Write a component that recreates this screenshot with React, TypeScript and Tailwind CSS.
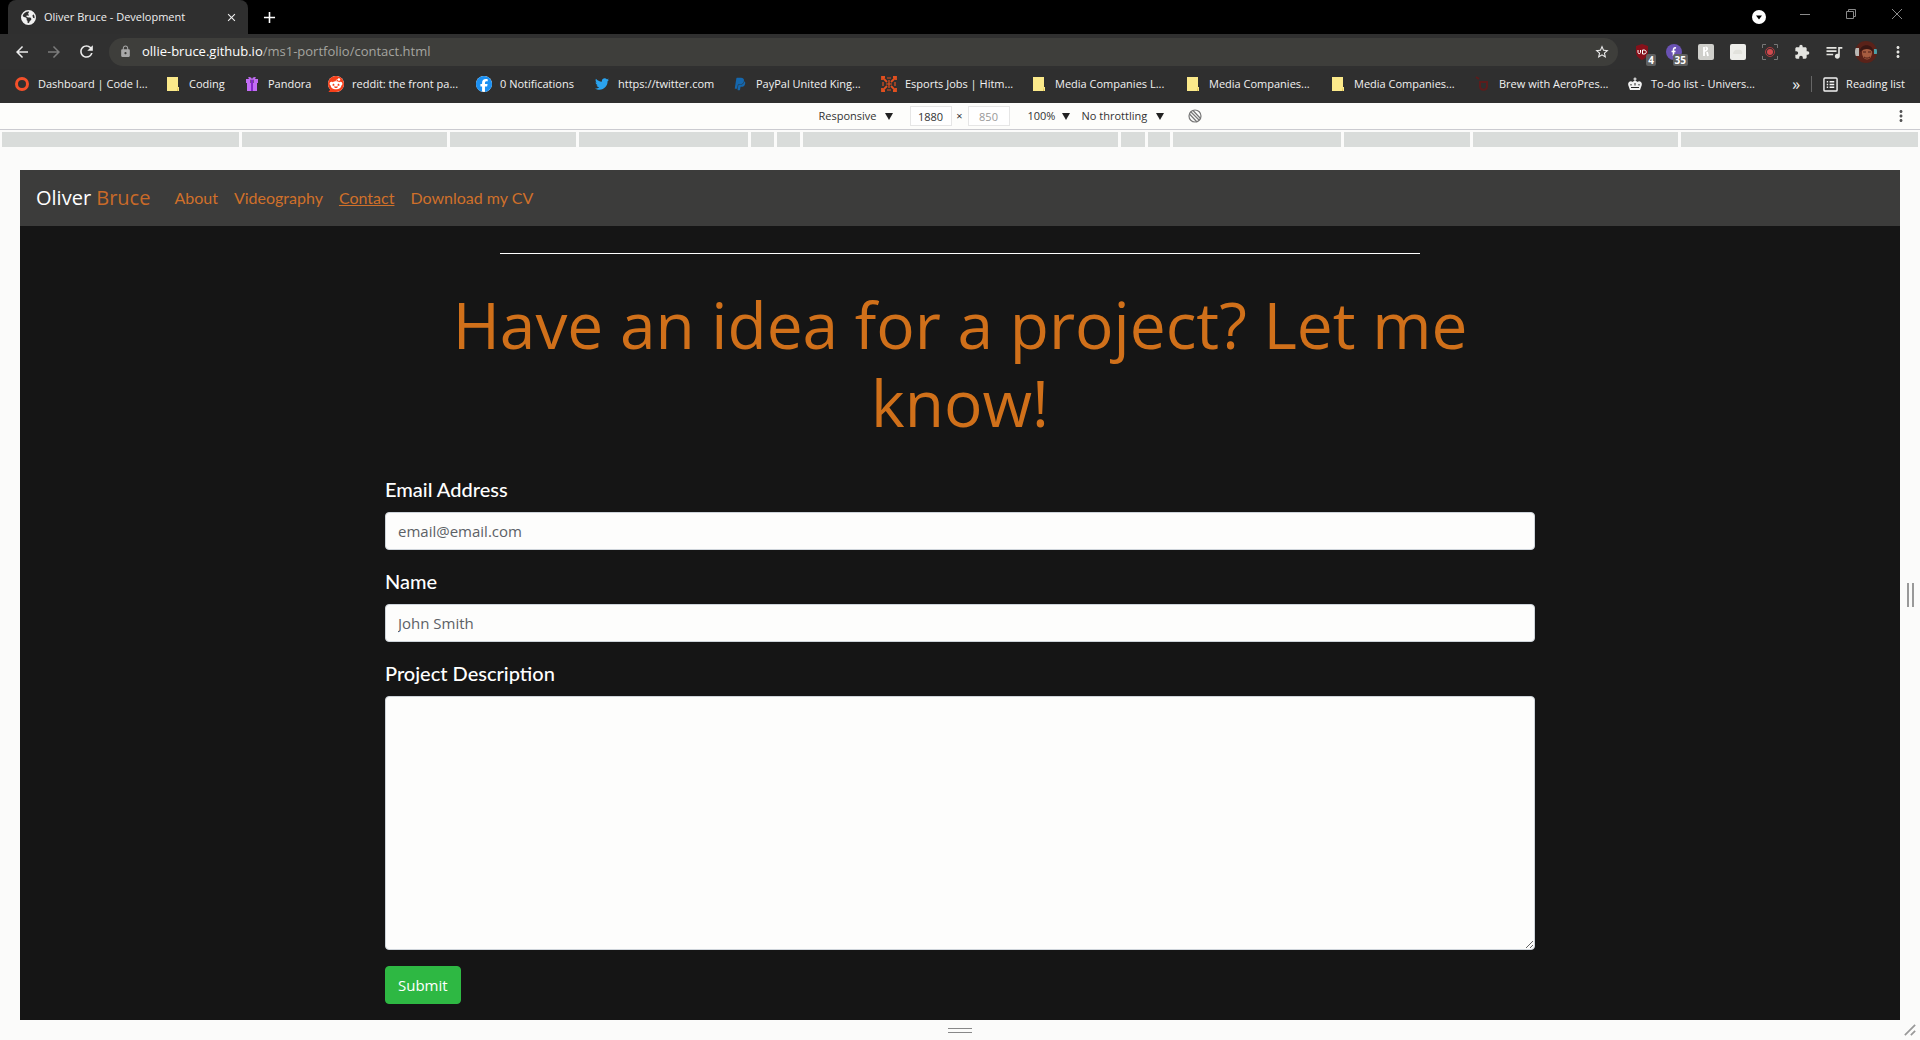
import React from "react";
import { FaEarthAmericas, FaFacebook, FaPaypal, FaTwitter, FaReddit } from "react-icons/fa6";
import {
  MdAdd,
  MdArrowBack,
  MdArrowForward,
  MdClose,
  MdExtension,
  MdLock,
  MdMoreVert,
  MdQueueMusic,
  MdRefresh,
  MdStarBorder,
} from "react-icons/md";

const NoteIcon = () => (
  <svg viewBox="0 0 16 16" className="size-4">
    <path d="M2 1h11v10h1v4H2z" fill="#fbe98a" />
    <path d="M13 11v4h-1z" fill="#d9bd4a" />
  </svg>
);

const GiftIcon = () => (
  <svg viewBox="0 0 16 16" className="size-4" fill="#c26cf5">
    <path d="M2 3h4.500v4H2zM9.500 3H14v4H9.500zM3 7h4v8H3zM9 7h4v8H9z" />
    <path d="M8 4C5 4 3 1 5 1s3 1 3 3zm0 0c3 0 5-3 3-3S8 2 8 4z" />
    <path d="M7 4h2v11H7z" fill="#8427c9" />
  </svg>
);

const TargetIcon = () => (
  <svg viewBox="0 0 16 16" className="size-4" fill="none" stroke="#e2501f" strokeWidth="1.8">
    <path d="M1 4V1h3M12 1h3v3M15 12v3h-3M4 15H1v-3" />
    <path d="M2 2l4 4M14 2l-4 4M2 14l4-4M14 14l-4-4" />
    <path d="M6 2h4M6 14h4M2 6v4M14 6v4M8 4v8M5 8h6" strokeWidth="1.2" />
  </svg>
);

const CrownIcon = () => (
  <svg viewBox="0 0 16 16" className="size-4" fill="#f1f1f1">
    <path d="M7.400 1.500h1.200v1h1v1h-1V5H7.400V3.500h-1v-1h1z" />
    <path d="M3 14l-1.800-5C.5 6 4 4 5.500 6 6.300 4.600 9.700 4.600 10.500 6 12 4 15.500 6 14.800 9L13 14z" />
    <path d="M4 11.500h8M4 8v1.500M8 7v2.500M12 8v1.500" stroke="#222" strokeWidth="1" />
  </svg>
);

const AeroIcon = () => (
  <svg viewBox="0 0 16 16" className="size-4" fill="none" stroke="#5c1c1c" strokeWidth="2">
    <path d="M1 1l3 2M5 5v5c0 5 7 5 7 0V6H6" />
  </svg>
);

const RingIcon = () => (
  <svg viewBox="0 0 16 16" className="size-4">
    <circle cx="8" cy="8" r="5.500" fill="none" stroke="#f4502a" strokeWidth="3" />
  </svg>
);

const RedditIcon = () => (
  <span className="grid size-4 place-items-center rounded-full bg-white">
    <FaReddit className="size-4 text-[#f5401a]" />
  </span>
);

const FacebookIcon = () => (
  <span className="grid size-4 place-items-center rounded-full bg-white">
    <FaFacebook className="size-4 text-[#1b90f2]" />
  </span>
);

const bookmarks = [
  { label: "Dashboard | Code I...", Icon: RingIcon, width: "w-[151px]" },
  { label: "Coding", Icon: NoteIcon, width: "w-[79px]" },
  { label: "Pandora", Icon: GiftIcon, width: "w-[84px]" },
  { label: "reddit: the front pa...", Icon: RedditIcon, width: "w-[148px]" },
  { label: "0 Notifications", Icon: FacebookIcon, width: "w-[118px]" },
  { label: "https://twitter.com", Icon: () => <FaTwitter className="size-[14px] text-[#2aa3ef]" />, width: "w-[138px]" },
  { label: "PayPal United King...", Icon: () => <FaPaypal className="size-[14px] text-[#1567ad]" />, width: "w-[149px]" },
  { label: "Esports Jobs | Hitm...", Icon: TargetIcon, width: "w-[150px]" },
  { label: "Media Companies L...", Icon: NoteIcon, width: "w-[154px]" },
  { label: "Media Companies...", Icon: NoteIcon, width: "w-[145px]" },
  { label: "Media Companies...", Icon: NoteIcon, width: "w-[145px]" },
  { label: "Brew with AeroPres...", Icon: AeroIcon, width: "w-[152px]" },
  { label: "To-do list - Univers...", Icon: CrownIcon, width: "w-[150px]" },
];

const breakpoints = [237, 205, 125, 169, 23, 23, 315, 24, 22, 168, 125, 205, 237];

const navLinks = ["About", "Videography", "Contact", "Download my CV"];

function TabStrip() {
  return (
    <div className="flex h-[34px] items-stretch bg-black pl-2">
      <div className="flex w-[240px] items-center gap-2 rounded-t-lg bg-[#2f2f2f] pr-[10px] pl-[13px] text-[#f0f0f0]">
        <FaEarthAmericas className="size-[15px] shrink-0" />
        <span className="flex-1 text-[11px] whitespace-nowrap">Oliver Bruce - Development</span>
        <button aria-label="Close tab">
          <MdClose className="size-[13px]" />
        </button>
      </div>
      <button aria-label="New tab" className="px-3 text-white">
        <MdAdd className="size-[19px]" />
      </button>
      <div className="ml-auto flex text-[#8a8a8a]">
        <button aria-label="Search tabs" className="grid w-[46px] place-items-center">
          <svg viewBox="0 0 14 14" className="size-[14px]">
            <circle cx="7" cy="7" r="7" fill="#fff" />
            <path d="M4 5.500h6L7 9.500z" fill="#000" />
          </svg>
        </button>
        {[
          ["Minimize", "M0 5.500h10"],
          ["Restore", "M.5 2.500h7v7h-7zM2.500 2.500v-2h7v7h-2"],
          ["Close", "M0 0l10 10M10 0L0 10"],
        ].map(([name, d]) => (
          <button key={name} aria-label={name} className="flex w-[46px] justify-center pt-[9px]">
            <svg viewBox="0 0 10 10" className="size-[10px]" fill="none" stroke="currentColor">
              <path d={d} />
            </svg>
          </button>
        ))}
      </div>
    </div>
  );
}

function Extension({ name, badge, children }: { name: string; badge?: string; children: React.ReactNode }) {
  return (
    <button aria-label={name} className="relative grid h-8 w-8 place-items-center text-[#e4e4e0]">
      {children}
      {badge && (
        <span className="absolute right-[2px] bottom-[2px] rounded-xs bg-[#5f6060] px-[2px] text-[10px] leading-[12px] font-bold text-white">
          {badge}
        </span>
      )}
    </button>
  );
}

function Toolbar() {
  return (
    <div className="flex h-[35px] items-center bg-[#303030] px-[6px] text-[#ececec]">
      <button aria-label="Back" className="grid w-8 place-items-center">
        <MdArrowBack className="size-[18px]" />
      </button>
      <button aria-label="Forward" className="grid w-8 place-items-center text-[#7b7b7b]">
        <MdArrowForward className="size-[18px]" />
      </button>
      <button aria-label="Reload" className="grid w-8 place-items-center">
        <MdRefresh className="size-[19px]" />
      </button>
      <label className="ml-[7px] flex h-7 flex-1 items-center rounded-full bg-[#3e3e3b] pr-2 pl-[10px]">
        <MdLock className="size-[13px] text-[#a8a8a8]" />
        <span className="relative ml-[10px] flex-1 text-[13px]">
          <input
            aria-label="Address"
            defaultValue="ollie-bruce.github.io/ms1-portfolio/contact.html"
            className="w-full bg-transparent text-transparent outline-none"
          />
          <span aria-hidden="true" className="pointer-events-none absolute inset-0 text-[#a5a5a0]">
            <span className="text-white">ollie-bruce.github.io</span>/ms1-portfolio/contact.html
          </span>
        </span>
        <MdStarBorder className="size-4" />
      </label>
      <div className="ml-2 flex">
        <Extension name="Ad blocker" badge="4">
          <svg viewBox="0 0 16 16" className="size-4">
            <path d="M8 0l6 2v6c0 4-3 6.500-6 8-3-1.500-6-4-6-8V2z" fill="#86101a" />
            <path d="M4 6v2.500c0 1.500 2.500 1.500 2.500 0V6M8.500 6v4h1.500c3 0 3-4 0-4z" fill="none" stroke="#fff" />
          </svg>
        </Extension>
        <Extension name="Trackers" badge="35">
          <svg viewBox="0 0 16 16" className="size-4">
            <circle cx="8" cy="8" r="8" fill="#6a52b3" />
            <path d="M10 4c-2-.5-2.500.5-2.500 2v6M5.500 7.500h4" fill="none" stroke="#fff" strokeWidth="1.6" />
          </svg>
        </Extension>
        <Extension name="Honey">
          <svg viewBox="0 0 16 16" className="size-4">
            <rect width="16" height="16" rx="2" fill="#cfcfcb" />
            <path d="M6 3v9M6 7.500c4-1 4-4 1.500-4M9 8l1 4" fill="none" stroke="#fff" strokeWidth="1.800" />
          </svg>
        </Extension>
        <Extension name="Notes">
          <svg viewBox="0 0 16 16" className="size-4">
            <rect width="16" height="16" rx="2" fill="#eeeeea" />
            <path d="M3 10c0-3 3-5 5-4 3-1 5 1 4 4z" fill="#e2e2dc" />
          </svg>
        </Extension>
        <Extension name="Screen recorder">
          <svg viewBox="0 0 16 16" className="size-4" fill="none" stroke="#777">
            <path d="M.5 4V.5H4M12 .5h3.500V4M15.500 12v3.500H12M4 15.500H.5V12" />
            <circle cx="8" cy="8" r="4.500" stroke="#b33a3f" />
            <circle cx="8" cy="8" r="3" fill="#d24a4e" stroke="none" />
          </svg>
        </Extension>
        <Extension name="Extensions">
          <MdExtension className="size-4" />
        </Extension>
        <Extension name="Media controls">
          <MdQueueMusic className="size-5" />
        </Extension>
        <Extension name="Profile">
          <svg viewBox="0 0 22 22" className="size-[22px] rounded-full">
            <rect width="22" height="22" fill="#5a2219" />
            <path d="M0 7h4v8H0z" fill="#b9b9b5" />
            <path d="M19 8h3v5h-3z" fill="#4aa0a8" />
            <ellipse cx="12" cy="12" rx="5" ry="6.500" fill="#a65c40" />
            <path d="M5 11c-1-9 14-9 13 0-3-4-9-4-13 0z" fill="#3a1713" />
            <path d="M8 11h3M13 11h3M9 16c2 1.500 4 1.500 6 0" fill="none" stroke="#4b1c16" />
          </svg>
        </Extension>
        <Extension name="Browser menu">
          <MdMoreVert className="size-[18px]" />
        </Extension>
      </div>
    </div>
  );
}

function BookmarksBar() {
  return (
    <div className="flex h-[34px] items-center bg-[#2f2f2f] pb-1 pl-[14px] text-[11px] whitespace-nowrap text-[#f2f2f2]">
      {bookmarks.map(({ label, Icon, width }, i) => (
        <a key={i} href="#" className={`flex shrink-0 items-center gap-2 ${width}`}>
          <span className="grid size-4 place-items-center">
            <Icon />
          </span>
          {label}
        </a>
      ))}
      <div className="ml-auto flex items-center pr-[15px]">
        <button aria-label="More bookmarks" className="text-base leading-4">
          »
        </button>
        <span className="mx-[11px] h-4 w-px bg-[#666]" />
        <button className="flex items-center gap-2">
          <svg viewBox="0 0 16 16" className="size-[15px]" fill="none" stroke="currentColor" strokeWidth="1.500">
            <rect x="1" y="1" width="14" height="14" rx="1" />
            <path d="M4 5h1.500M7 5h5M4 8h1.500M7 8h5M4 11h1.500M7 11h5" />
          </svg>
          Reading list
        </button>
      </div>
    </div>
  );
}

function Dropdown({ label, value, width }: { label: string; value: string; width: string }) {
  return (
    <label className="flex items-center gap-1">
      <select aria-label={label} className={`appearance-none bg-transparent outline-none ${width}`}>
        <option>{value}</option>
      </select>
      <svg viewBox="0 0 8 8" className="size-2">
        <path d="M0 1h8L4 8z" fill="#222" />
      </svg>
    </label>
  );
}

function DeviceBar() {
  return (
    <div className="flex h-[27px] items-center border-b border-[#cbcbd0] bg-[#fdfdfb] text-[11px] text-[#333]">
      <div className="flex flex-1 items-center justify-center pl-[136px]">
        <Dropdown label="Device" value="Responsive" width="w-[62px]" />
        <input
          aria-label="Width"
          defaultValue="1880"
          className="ml-[17px] h-5 w-[42px] border border-[#e6e6e6] bg-white text-center"
        />
        <span className="w-4 text-center">×</span>
        <input
          aria-label="Height"
          defaultValue="850"
          className="mr-[18px] h-5 w-[42px] border border-[#e6e6e6] bg-white text-center text-[#999]"
        />
        <Dropdown label="Zoom" value="100%" width="w-[30px]" />
        <span className="w-3" />
        <Dropdown label="Throttling" value="No throttling" width="w-[70px]" />
        <button aria-label="Rotate" className="ml-6">
          <svg viewBox="0 0 14 14" className="size-[14px]" fill="none" stroke="#777" strokeWidth="1.200">
            <circle cx="7" cy="7" r="6" />
            <path d="M5 1.500l7.500 8M1.500 5l7.500 8M3 3l8 8" />
          </svg>
        </button>
      </div>
      <button aria-label="Device options" className="w-9 pl-2 text-[#555]">
        <MdMoreVert className="size-[18px]" />
      </button>
    </div>
  );
}

function Site() {
  return (
    <div className="min-w-0 flex-1 bg-[#151515] font-['Lato',sans-serif] text-white">
      <nav className="flex h-14 items-center bg-[#3c3c3b] px-4">
        <a href="#" className="mr-4 font-['Open_Sans',sans-serif] text-xl">
          Oliver <span className="text-[#c96a28]">Bruce</span>
        </a>
        {navLinks.map((link) => (
          <a
            key={link}
            href="#"
            className={`px-2 text-base text-[#d0702a] ${link === "Contact" ? "underline" : ""}`}
          >
            {link}
          </a>
        ))}
      </nav>
      <main className="mx-auto max-w-[1150px] pt-[27px] pb-4">
        <hr className="mx-auto w-4/5 border-white" />
        <h1 className="my-8 text-center font-['Open_Sans',sans-serif] text-[64px] leading-[78px] font-medium text-[#d0701a]">
          Have an idea for a project? Let me know!
        </h1>
        <form className="flex flex-col items-start text-xl leading-[30px]">
          <label htmlFor="email" className="mb-2 font-medium">
            Email Address
          </label>
          <input
            id="email"
            type="email"
            placeholder="email@email.com"
            className="mb-4 h-[38px] w-full rounded-sm border border-[#ced4da] bg-[#fdfdfc] px-3 font-['Open_Sans',sans-serif] text-[15px] text-[#495057] placeholder:text-[#5c6166]"
          />
          <label htmlFor="name" className="mb-2 font-medium">
            Name
          </label>
          <input
            id="name"
            placeholder="John Smith"
            className="mb-4 h-[38px] w-full rounded-sm border border-[#ced4da] bg-[#fdfdfc] px-3 font-['Open_Sans',sans-serif] text-[15px] text-[#495057] placeholder:text-[#5c6166]"
          />
          <label htmlFor="description" className="mb-2 font-medium">
            Project Description
          </label>
          <textarea
            id="description"
            className="mb-4 h-[254px] w-full rounded-sm border border-[#ced4da] bg-[#fdfdfc] px-3 text-[#495057]"
          />
          <button
            type="button"
            className="h-[38px] rounded-sm border border-[#2eb843] bg-[#2eb843] px-3 font-['Open_Sans',sans-serif] text-[15px] text-white"
          >
            Submit
          </button>
        </form>
      </main>
    </div>
  );
}

export default function App() {
  return (
    <div className="flex min-h-screen flex-col bg-[#fbfbfa] font-['Open_Sans','Noto_Sans',sans-serif]">
      <TabStrip />
      <Toolbar />
      <BookmarksBar />
      <DeviceBar />
      <div className="mx-[2px] mt-[2px] mb-[23px] flex h-[15px] gap-[3px]">
        {breakpoints.map((size, i) => (
          <div key={i} className="basis-0 bg-[#d9dcda]" style={{ flexGrow: size }} />
        ))}
      </div>
      <div className="flex flex-1">
        <div className="w-5" />
        <Site />
        <div className="flex w-5 items-center justify-center gap-[3px]">
          <span className="h-6 w-[2px] bg-[#999]" />
          <span className="h-6 w-[2px] bg-[#999]" />
        </div>
      </div>
      <div className="relative flex h-5 flex-col items-center justify-center gap-[3px]">
        <span className="h-px w-6 bg-[#888]" />
        <span className="h-px w-6 bg-[#888]" />
        <svg viewBox="0 0 14 14" className="absolute right-1 bottom-1 size-3" fill="none" stroke="#999" strokeWidth="2">
          <path d="M1 13L13 1M8 13l5-5" />
        </svg>
      </div>
    </div>
  );
}
